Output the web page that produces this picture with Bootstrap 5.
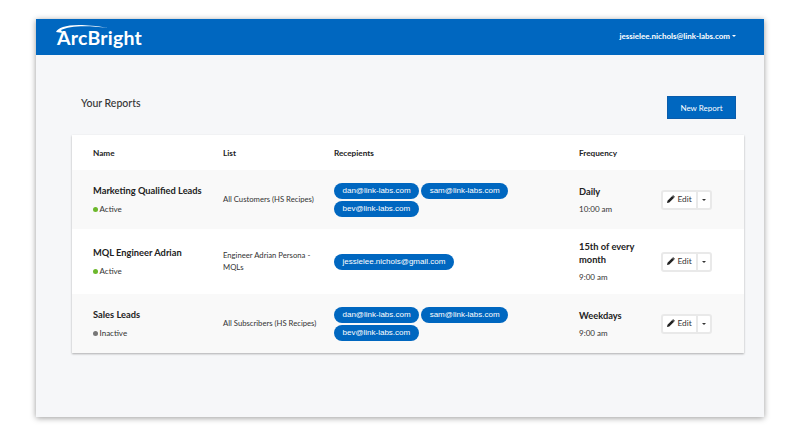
<!DOCTYPE html>
<html lang="en">
<head>
    <meta charset="UTF-8">
    <meta name="viewport" content="width=device-width, initial-scale=1">
    <link href="https://cdn.jsdelivr.net/npm/bootstrap@5.3.2/dist/css/bootstrap.min.css" rel="stylesheet">
    <style>
        body { background: #fff; font-family: Lato, sans-serif; color: #333; padding: 19px 36px 20px; }
        .app-window { height: 398px; background: #f6f7f9; box-shadow: 0 1px 6px rgba(0,0,0,.4); }
        .top-bar { height: 35.5px; background: #0067c0; padding: 0 28px 0 21px; }
        .logo { position: relative; color: #fff; font-size: 19.5px; font-weight: 700; letter-spacing: .2px; line-height: 1; padding-top: 2px; }
        .logo svg { position: absolute; left: -1px; top: -5px; }
        .user-link { color: #fff; font-size: 8px; font-weight: 700; text-decoration: none; padding-bottom: 2px; }
        .user-link::after { margin-left: 2px; border-top-width: 2.5px; border-left-width: 2.5px; border-right-width: 2.5px; }
        .page-head { padding: 41.5px 28px 0 45px; height: 80.5px; }
        .page-title { font-size: 10.5px; margin: 0; color: #333; padding-top: 1px; }
        .new-btn { width: 69px; height: 23px; padding: 0; background: #0067c0; border: 1px solid #0a5cab; border-radius: 0; color: #fff; font-size: 8px; }
        .report-box { margin: 0 20px 0 36px; background: #fff; box-shadow: 0 1px 2px rgba(0,0,0,.3); }
        .report-table { table-layout: fixed; width: 672px; margin: 0; font-size: 7.7px; color: #333; --bs-table-bg: transparent; }
        .report-table th, .report-table td { border: 0; padding: 0 0 0 11px; vertical-align: middle; }
        .report-table th:first-child, .report-table td:first-child { padding-left: 21px; }
        .report-table th { height: 35px; padding-top: 1px; font-size: 8.2px; font-weight: 700; color: #222; }
        .report-table tbody tr:nth-child(odd) td { background: #f9f9f9; }
        .row-a { height: 59px; }
        .row-b { height: 65px; }
        .report-name { font-size: 9.3px; font-weight: 700; color: #222; margin-bottom: 5px; }
        .state { font-size: 8px; }
        .dot { display: inline-block; width: 5px; height: 5px; border-radius: 50%; margin-right: 1.5px; }
        .dot-on { background: #6cb82c; }
        .dot-off { background: #777; }
        .pill-wrap { gap: 2px; }
        .pill { background: #0067c0; color: #fff; font-family: "Liberation Sans", sans-serif; font-size: 8px; line-height: 16px; height: 16px; padding: 0 8.5px; border-radius: 8px; }
        .freq { font-size: 9.3px; font-weight: 700; color: #222; line-height: 13px; margin-bottom: 5px; }
        .time-text { font-size: 8px; }
        .edit-group .btn { background: #fff; border: 2px solid #e9e9e9; border-radius: 3px; font-size: 8.3px; color: #333; height: 20px; padding: 0; line-height: 1; }
        .edit-main { width: 37px; }
        .edit-more { width: 16px; margin-left: -2px !important; }
        .edit-more::after { margin: 0; border-top-width: 2.5px; border-left-width: 2.5px; border-right-width: 2.5px; vertical-align: 1px; }
        .pencil-icon { margin-right: 2px; vertical-align: -1px; }
    </style>
    <title>Your Reports</title>
</head>
<body>
<div class="app-window">
    <nav class="top-bar d-flex align-items-center justify-content-between">
        <div class="logo">ArcBright
            <svg width="54" height="14" viewBox="0 0 54 14"><path d="M0 11C3 5 18 1 52 7C30 4 13 5 5 9L7 12Z" fill="#fff"/></svg>
        </div>
        <a href="#" class="user-link dropdown-toggle">jessielee.nichols@link-labs.com</a>
    </nav>

    <div class="page-head d-flex justify-content-between align-items-start">
        <h1 class="page-title">Your Reports</h1>
        <button type="button" class="btn new-btn">New Report</button>
    </div>

    <div class="report-box">
        <table class="table report-table">
            <colgroup><col style="width:140px"><col style="width:111px"><col style="width:245px"><col style="width:82px"><col style="width:94px"></colgroup>
            <thead>
                <tr><th>Name</th><th>List</th><th>Recepients</th><th>Frequency</th><th></th></tr>
            </thead>
            <tbody id="reportRows"></tbody>
        </table>
    </div>
</div>
<script>
    const reports = [
        { name: 'Marketing Qualified Leads', active: true, list: 'All Customers (HS Recipes)', to: ['dan@link-labs.com', 'sam@link-labs.com', 'bev@link-labs.com'], freq: 'Daily', time: '10:00 am', cls: 'row-a' },
        { name: 'MQL Engineer Adrian', active: true, list: 'Engineer Adrian Persona - MQLs', to: ['jessielee.nichols@gmail.com'], freq: '15th of every month', time: '9:00 am', cls: 'row-b' },
        { name: 'Sales Leads', active: false, list: 'All Subscribers (HS Recipes)', to: ['dan@link-labs.com', 'sam@link-labs.com', 'bev@link-labs.com'], freq: 'Weekdays', time: '9:00 am', cls: 'row-a' }
    ];
    const pencil = '<svg width="8" height="8" viewBox="0 0 8 8" class="pencil-icon"><path d="M0 8L.5 5.7L5.2.9L7.1 2.8L2.3 7.5ZM5.7.4Q6.1 0 6.5.4L7.6 1.5Q8 1.9 7.6 2.3L7.3 2.6L5.4.7Z" fill="#222"/></svg>';
    document.getElementById('reportRows').innerHTML = reports.map(r => `
        <tr class="${r.cls}">
            <td><div class="report-name">${r.name}</div>
                <div class="state"><span class="dot ${r.active ? 'dot-on' : 'dot-off'}"></span>${r.active ? 'Active' : 'Inactive'}</div></td>
            <td>${r.list}</td>
            <td><div class="d-flex flex-wrap pill-wrap">${r.to.map(m => `<span class="pill">${m}</span>`).join('')}</div></td>
            <td><div class="freq">${r.freq}</div><div class="time-text">${r.time}</div></td>
            <td><div class="btn-group edit-group">
                <button type="button" class="btn edit-main">${pencil}Edit</button>
                <button type="button" class="btn edit-more dropdown-toggle" data-bs-toggle="dropdown" aria-label="More"></button>
            </div></td>
        </tr>`).join('');
</script>
<script src="https://cdn.jsdelivr.net/npm/bootstrap@5.3.2/dist/js/bootstrap.bundle.min.js"></script>
</body>
</html>
